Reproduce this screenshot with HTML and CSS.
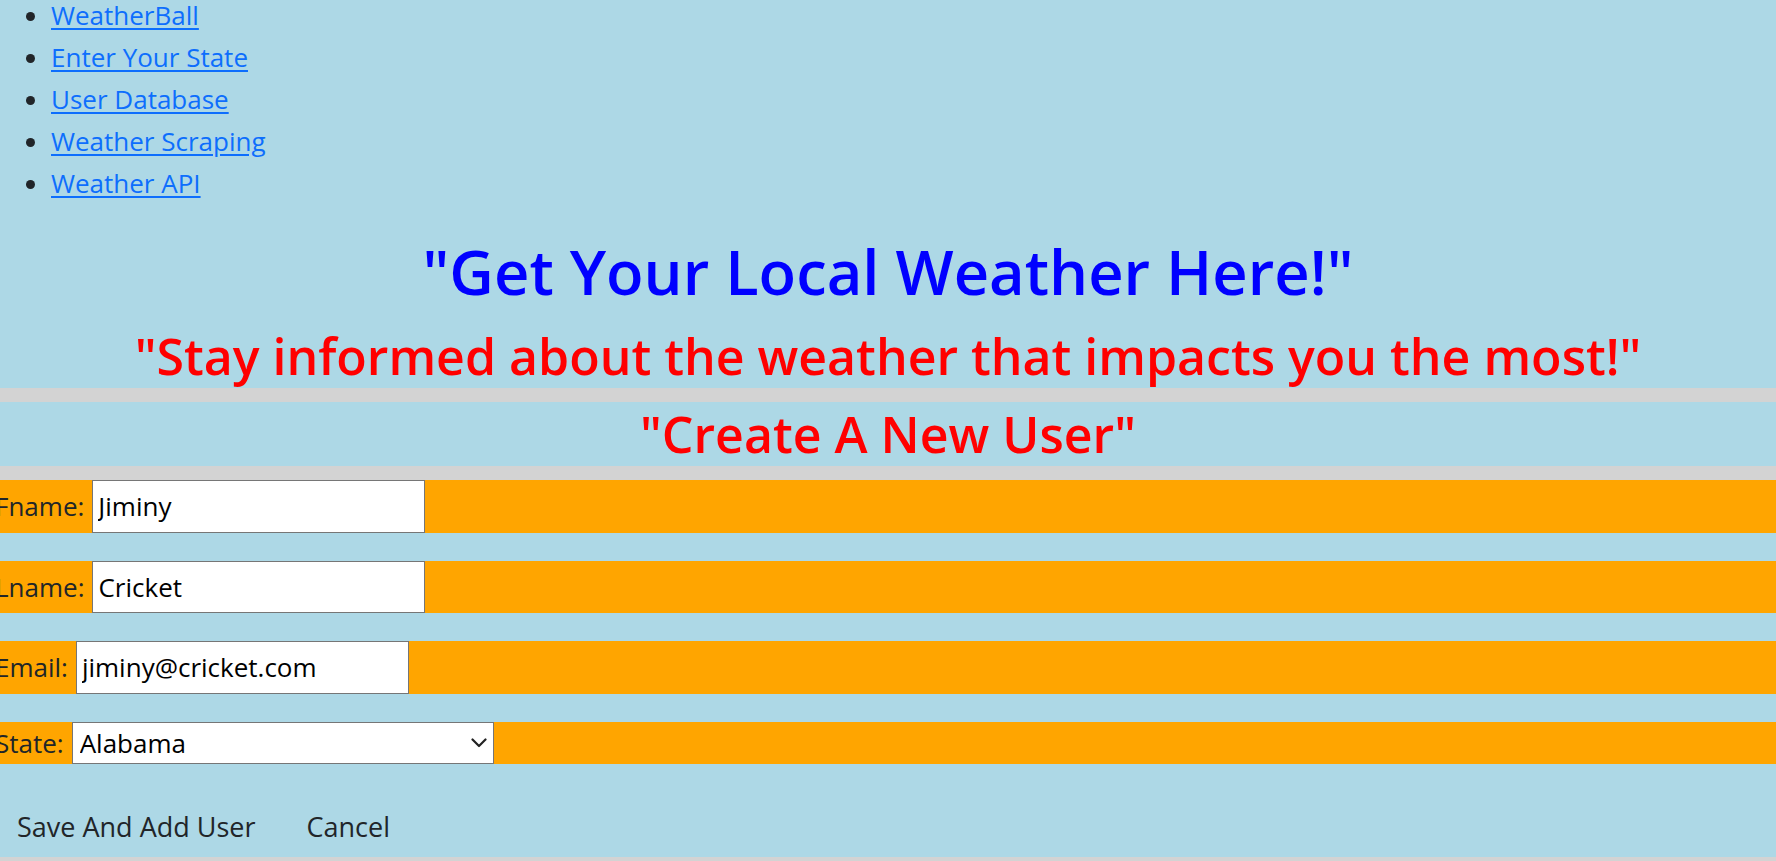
FILE: index.html
```html
<!DOCTYPE html>
<html lang="en">
<head>
<meta charset="utf-8">
<title>WeatherBall - Create A New User</title>
<link rel="stylesheet" href="styles.css">
</head>
<body>
<div class="page">
  <section class="panel header">
    <ul class="nav">
      <li><a href="#">WeatherBall</a></li>
      <li><a href="#">Enter Your State</a></li>
      <li><a href="#">User Database</a></li>
      <li><a href="#">Weather Scraping</a></li>
      <li><a href="#">Weather API</a></li>
    </ul>
    <h1 class="title">"Get Your Local Weather Here!"</h1>
    <h2 class="subtitle">"Stay informed about the weather that impacts you the most!"</h2>
  </section>
  <section class="panel">
    <h2 class="subtitle">"Create A New User"</h2>
  </section>
  <form class="panel form">
    <div class="field">
      <label class="field-label" for="fname">Fname:</label>
      <input class="field-input" id="fname" type="text" value="Jiminy">
    </div>
    <div class="field">
      <label class="field-label" for="lname">Lname:</label>
      <input class="field-input" id="lname" type="text" value="Cricket">
    </div>
    <div class="field">
      <label class="field-label" for="email">Email:</label>
      <input class="field-input" id="email" type="text" value="jiminy@cricket.com">
    </div>
    <div class="field">
      <label class="field-label" for="state">State:</label>
      <span class="select-wrap">
        <select class="field-select" id="state">
          <option>Alabama</option>
          <option>Alaska</option>
          <option>Arizona</option>
          <option>Arkansas</option>
          <option>California</option>
        </select>
        <svg class="chevron" width="16" height="10" viewBox="0 0 16 10" aria-hidden="true"><path d="M1.5 1.5 L8 8 L14.5 1.5" fill="none" stroke="#222" stroke-width="2.2" stroke-linecap="round" stroke-linejoin="round"/></svg>
      </span>
    </div>
    <div class="actions">
      <button class="btn" type="button">Save And Add User</button>
      <button class="btn" type="button">Cancel</button>
    </div>
  </form>
</div>
</body>
</html>
```
FILE: styles.css
```css
html, body {
  margin: 0;
  padding: 0;
}
body {
  background: #d3d3d3;
  font-family: "Open Sans", "Noto Sans", sans-serif;
  font-size: 26px;
  line-height: 42px;
  color: #212529;
  overflow: hidden;
}
.page {
  margin: -6px -5px 0 -5px;
}
.panel {
  background: #add8e6;
  margin-bottom: 14px;
}
.nav {
  margin: 0 0 28px;
  padding: 0 0 0 56px;
  list-style: disc;
}
.nav li {
  line-height: 42px;
}
.nav a {
  color: #0d6efd;
  text-decoration: underline;
  text-underline-offset: 3px;
}
.title {
  margin: 0 0 14px;
  font-size: 61.5px;
  line-height: 78px;
  font-weight: 600;
  color: #0000ff;
  text-align: center;
}
.subtitle {
  margin: 0;
  font-size: 50px;
  line-height: 64px;
  font-weight: 600;
  color: #ff0000;
  text-align: center;
}
.form {
  display: flex;
  flex-direction: column;
  gap: 28px;
  padding: 0;
}
.field {
  display: flex;
  align-items: center;
  column-gap: 8px;
  background: #ffa500;
}
.field-label {
  line-height: 42px;
}
.field-input {
  box-sizing: border-box;
  width: 333px;
  height: 52.5px;
  margin: 0;
  padding: 0 5px;
  border: 1px solid #767676;
  border-radius: 0;
  background: #fff;
  color: #000;
  font: inherit;
  line-height: 42px;
}
.select-wrap {
  position: relative;
  display: inline-flex;
}
.field-select {
  box-sizing: border-box;
  width: 422px;
  height: 42px;
  margin: 0;
  padding: 0 30px 0 7px;
  border: 1px solid #767676;
  border-radius: 0;
  background: #fff;
  color: #000;
  font: inherit;
  line-height: 40px;
  appearance: none;
  -webkit-appearance: none;
}
.chevron {
  position: absolute;
  right: 7px;
  top: 16px;
  pointer-events: none;
}
.actions {
  display: flex;
  gap: 7px;
}
.btn {
  margin: 0;
  padding: 13px 21px 8px;
  border: 1.75px solid transparent;
  background: transparent;
  color: #212529;
  font-family: inherit;
  font-size: 27px;
  line-height: 42px;
  cursor: pointer;
}
```
